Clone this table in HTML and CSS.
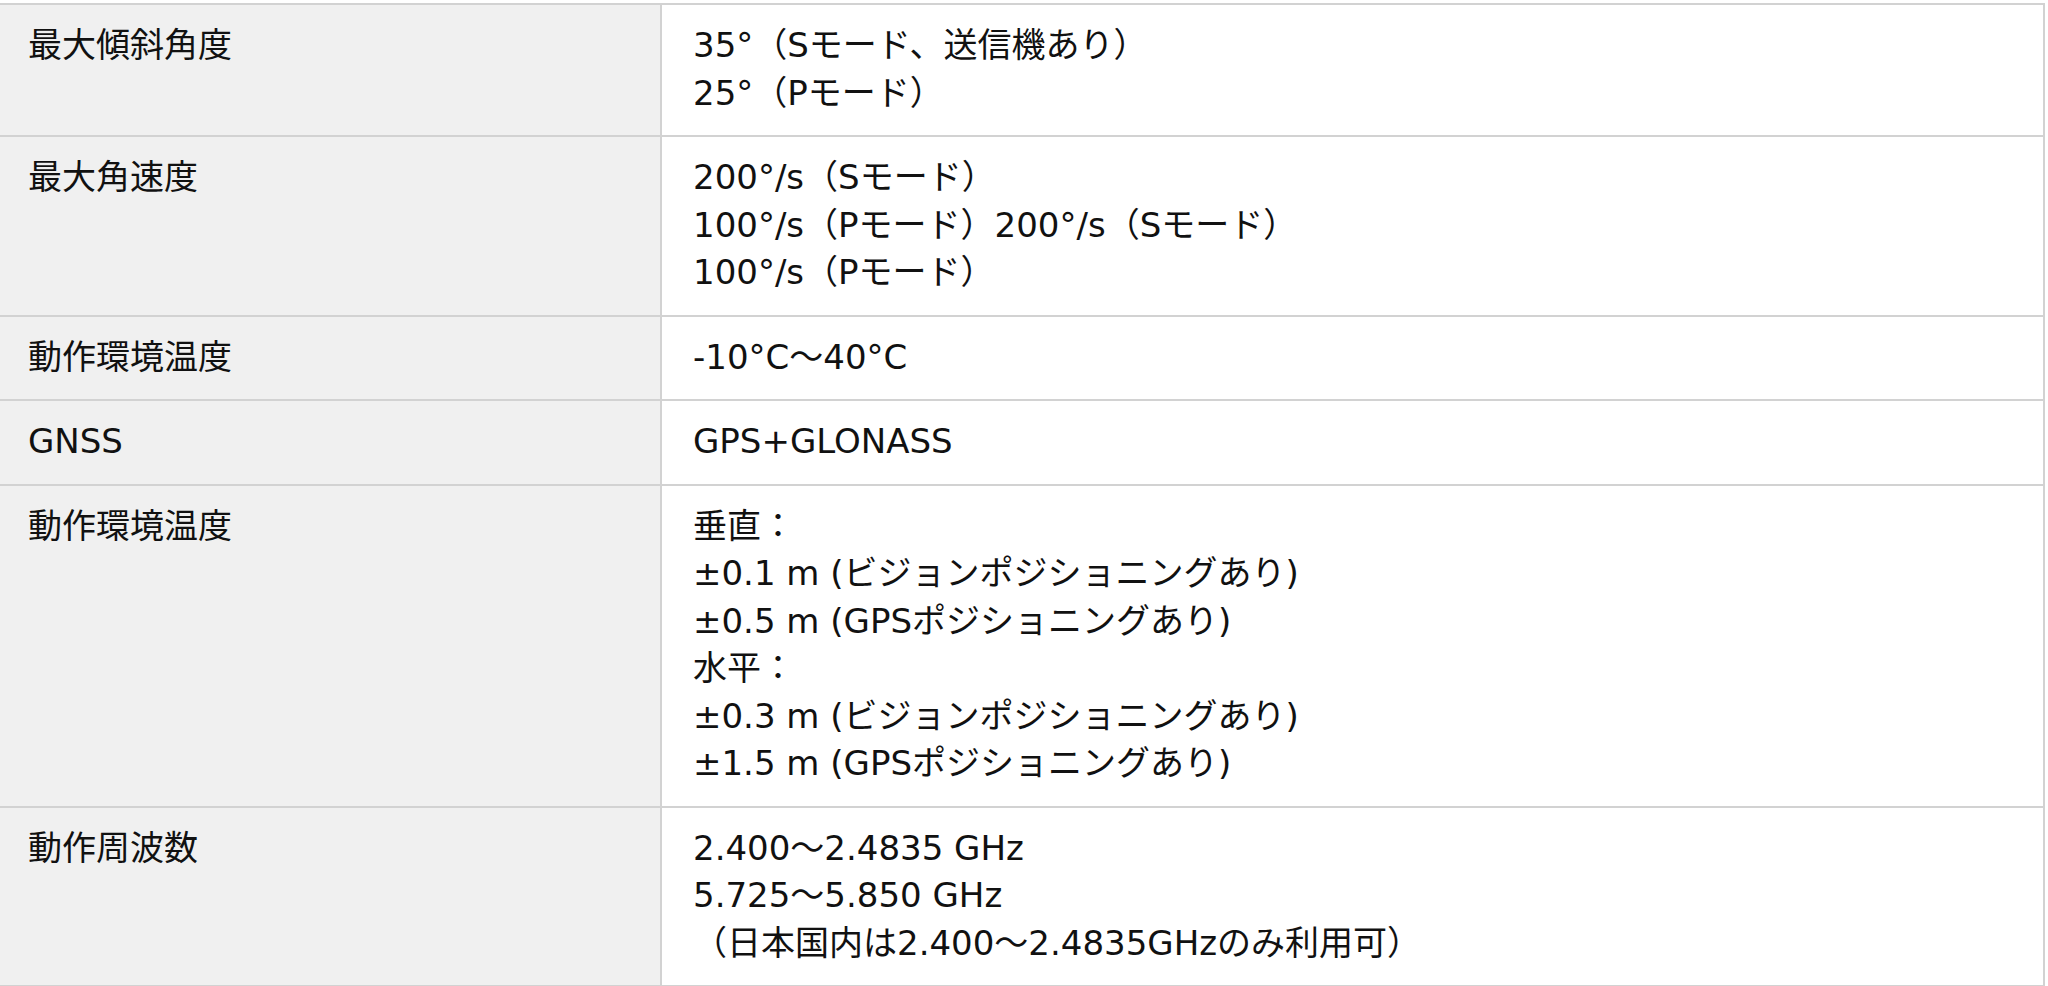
FILE: index.html
```html
<!DOCTYPE html>
<html lang="ja">
<head>
<meta charset="utf-8">
<title>仕様</title>
<link rel="stylesheet" href="styles.css">
</head>
<body>
<table class="spec">
  <colgroup><col class="col-label"><col class="col-value"></colgroup>
  <tbody>
    <tr>
      <th class="label">最大傾斜角度</th>
      <td class="value">35°（Sモード、送信機あり）<br>25°（Pモード）</td>
    </tr>
    <tr>
      <th class="label">最大角速度</th>
      <td class="value">200°/s（Sモード）<br>100°/s（Pモード）200°/s（Sモード）<br>100°/s（Pモード）</td>
    </tr>
    <tr>
      <th class="label">動作環境温度</th>
      <td class="value">-10°C～40°C</td>
    </tr>
    <tr>
      <th class="label">GNSS</th>
      <td class="value">GPS+GLONASS</td>
    </tr>
    <tr>
      <th class="label">動作環境温度</th>
      <td class="value">垂直：<br>±0.1 m (ビジョンポジショニングあり)<br>±0.5 m (GPSポジショニングあり)<br>水平：<br>±0.3 m (ビジョンポジショニングあり)<br>±1.5 m (GPSポジショニングあり)</td>
    </tr>
    <tr>
      <th class="label">動作周波数</th>
      <td class="value">2.400～2.4835 GHz<br>5.725～5.850 GHz<br>（日本国内は2.400～2.4835GHzのみ利用可）</td>
    </tr>
  </tbody>
</table>
</body>
</html>
```
FILE: styles.css
```css
html, body {
  margin: 0;
  padding: 0;
  background: #ffffff;
}

body {
  padding-top: 3px;
  font-family: "DejaVu Sans", "Noto Sans CJK JP", sans-serif;
  font-size: 34px;
  line-height: 47.5px;
  color: #111111;
}

.spec {
  border-collapse: collapse;
  width: 2045px;
  table-layout: fixed;
}

.col-label {
  width: 661px;
}

.spec th,
.spec td {
  border: 2px solid #d2d2d2;
  vertical-align: top;
  text-align: left;
  font-weight: normal;
  padding: 17px 30px 18px 30px;
}

.spec .label {
  background: #f0f0f0;
  border-left: none;
  padding-left: 28px;
}

.spec .value {
  background: #ffffff;
  padding-left: 31px;
}
```
